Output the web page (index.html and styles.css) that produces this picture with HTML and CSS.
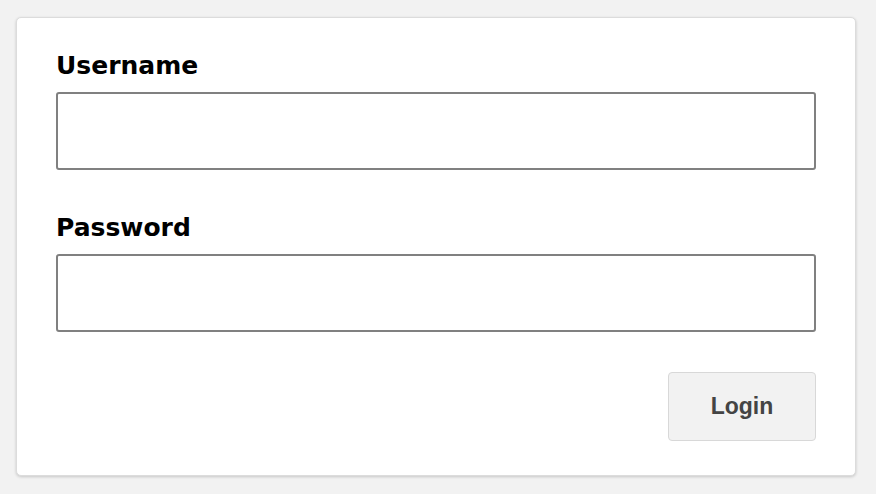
FILE: index.html
```html
<!DOCTYPE html>
<html lang="en">
<head>
<meta charset="utf-8">
<title>Login</title>
<link rel="stylesheet" href="styles.css">
</head>
<body>
<form class="card">
  <label class="field-label" for="username">Username</label>
  <input class="field-input" id="username" type="text">
  <label class="field-label field-label--second" for="password">Password</label>
  <input class="field-input" id="password" type="password">
  <div class="actions">
    <button class="login-btn" type="button">Login</button>
  </div>
</form>
</body>
</html>
```
FILE: styles.css
```css
html, body {
  margin: 0;
  padding: 0;
  background: #f2f2f2;
  height: 100%;
}
body {
  padding: 17px 0 0 16px;
  box-sizing: border-box;
}
.card {
  width: 840px;
  box-sizing: border-box;
  background: #ffffff;
  border: 1px solid #dcdcdc;
  border-radius: 5px;
  box-shadow: 0 1px 3px rgba(0, 0, 0, 0.18);
  padding: 33px 39px 34px 39px;
  display: flex;
  flex-direction: column;
  margin: 0;
}
.field-label {
  display: block;
  font-family: "DejaVu Sans", sans-serif;
  font-weight: bold;
  font-size: 25px;
  line-height: 30px;
  color: #000;
  margin: 0 0 11px 0;
}
.field-label--second {
  margin-top: 43px;
}
.field-input {
  display: block;
  width: 760px;
  height: 78px;
  box-sizing: border-box;
  margin: 0;
  border: 2px solid #808080;
  border-radius: 3px;
  background: #fff;
  font-family: "DejaVu Sans", sans-serif;
  font-size: 20px;
  padding: 0 12px;
  outline: none;
}
.actions {
  display: flex;
  justify-content: flex-end;
  width: 760px;
  margin-top: 40px;
}
.login-btn {
  width: 148px;
  height: 69px;
  box-sizing: border-box;
  background: #f2f2f2;
  border: 1.5px solid #d8d8d8;
  border-radius: 4px;
  font-family: "Liberation Sans", Arial, sans-serif;
  font-weight: bold;
  font-size: 23px;
  color: #444;
  padding: 0;
  margin: 0;
  cursor: pointer;
}
```
